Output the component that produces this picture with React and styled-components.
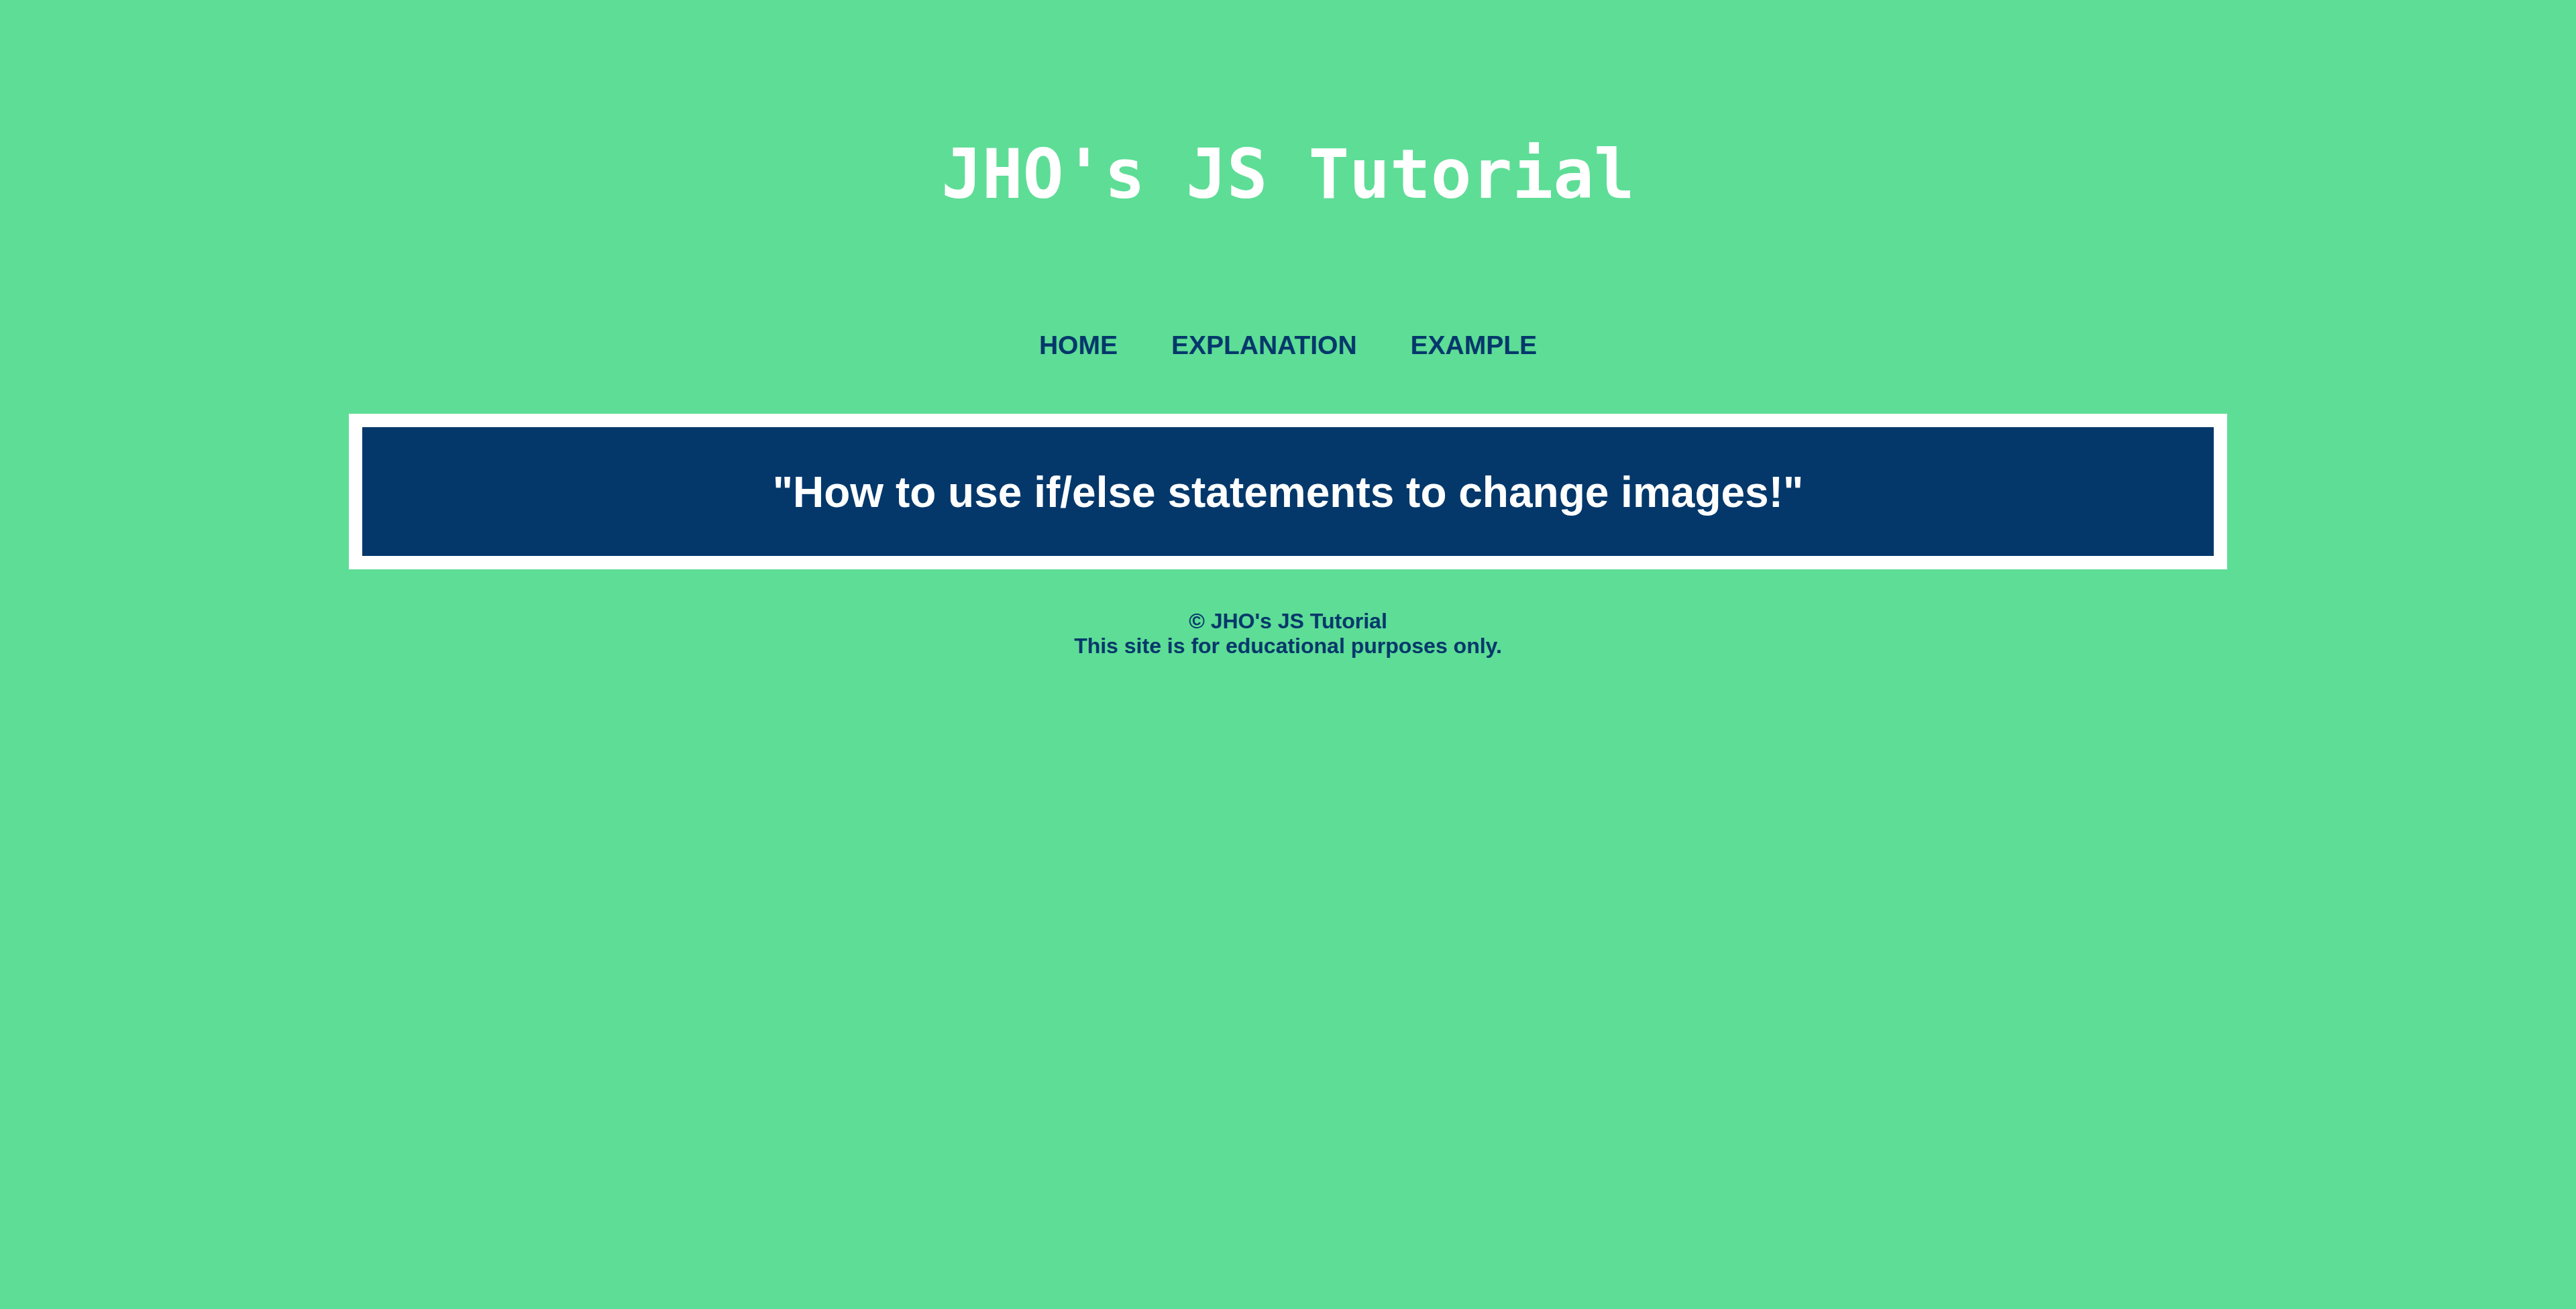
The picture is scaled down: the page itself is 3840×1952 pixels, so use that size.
import React from 'react';
import styled, { createGlobalStyle } from 'styled-components';

const GlobalStyle = createGlobalStyle`
  html, body {
    margin: 0;
    padding: 0;
    background: #5edd96;
  }
  body {
    font-family: "Liberation Sans", Arial, sans-serif;
  }
`;

const Page = styled.div`
  min-height: 100vh;
  background: #5edd96;
  display: flex;
  flex-direction: column;
  align-items: center;
  padding-top: 201px;
  box-sizing: border-box;
`;

const Title = styled.h1`
  margin: 0;
  font-family: "DejaVu Sans Mono", "Liberation Mono", monospace;
  font-weight: bold;
  font-size: 101px;
  line-height: 118px;
  color: #ffffff;
  text-align: center;
`;

const Nav = styled.nav`
  display: flex;
  gap: 80px;
  margin-top: 173px;
`;

const NavLink = styled.a`
  font-size: 39px;
  line-height: 46px;
  font-weight: bold;
  color: #04386b;
  text-decoration: none;
  cursor: pointer;
`;

const Frame = styled.section`
  width: 2800px;
  margin-top: 79px;
  padding: 20px;
  box-sizing: border-box;
  background: #ffffff;
`;

const Banner = styled.div`
  background: #04386b;
  padding: 60px 0 58px;
  text-align: center;
`;

const Headline = styled.h2`
  margin: 0;
  font-size: 64px;
  line-height: 74px;
  font-weight: bold;
  color: #ffffff;
`;

const Footer = styled.footer`
  margin-top: 59px;
  text-align: center;
  font-size: 32px;
  line-height: 37px;
  font-weight: bold;
  color: #04386b;
`;

const links = ['HOME', 'EXPLANATION', 'EXAMPLE'];

export default function App() {
  return (
    <>
      <GlobalStyle />
      <Page>
        <Title>JHO's JS Tutorial</Title>
        <Nav>
          {links.map(label => (
            <NavLink key={label}>{label}</NavLink>
          ))}
        </Nav>
        <Frame>
          <Banner>
            <Headline>"How to use if/else statements to change images!"</Headline>
          </Banner>
        </Frame>
        <Footer>
          <div>© JHO's JS Tutorial</div>
          <div>This site is for educational purposes only.</div>
        </Footer>
      </Page>
    </>
  );
}
